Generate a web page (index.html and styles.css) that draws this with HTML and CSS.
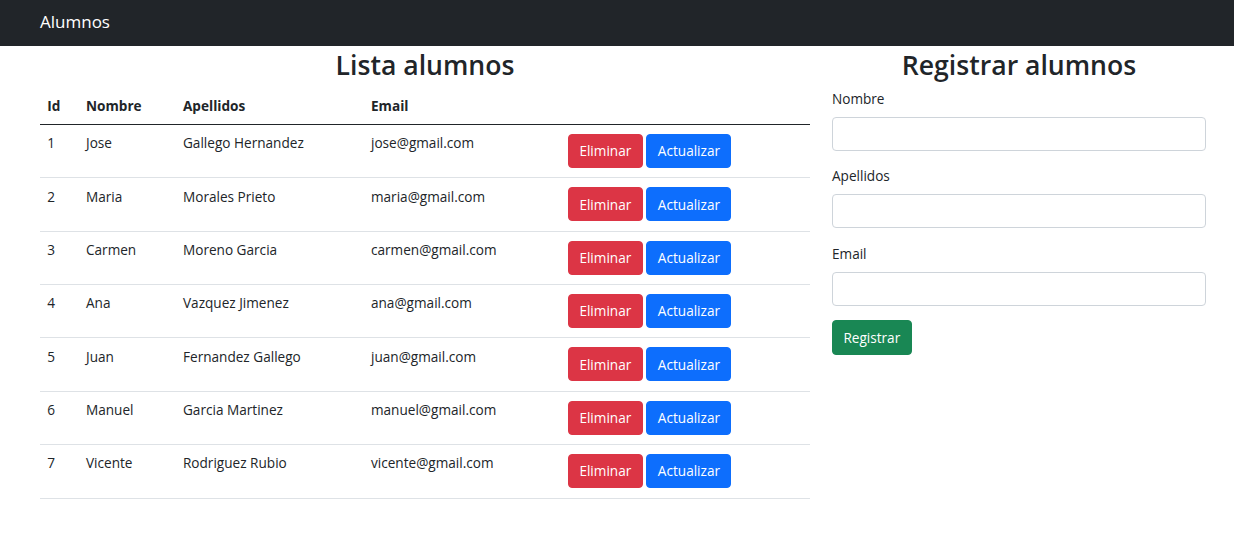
FILE: index.html
```html
<!DOCTYPE html>
<html lang="es">
<head>
<meta charset="utf-8">
<title>Alumnos</title>
<link rel="stylesheet" href="styles.css">
</head>
<body>
<nav class="navbar">
  <span class="brand">Alumnos</span>
</nav>
<main class="main">
  <section class="list">
    <h2 class="title">Lista alumnos</h2>
    <table class="table">
      <colgroup>
        <col class="c-id"><col class="c-nombre"><col class="c-apellidos"><col class="c-email"><col class="c-actions">
      </colgroup>
      <thead>
        <tr><th>Id</th><th>Nombre</th><th>Apellidos</th><th>Email</th><th></th></tr>
      </thead>
      <tbody>
        <tr><td>1</td><td>Jose</td><td>Gallego Hernandez</td><td>jose@gmail.com</td><td><div class="actions"><button class="btn btn-danger">Eliminar</button><button class="btn btn-primary">Actualizar</button></div></td></tr>
        <tr><td>2</td><td>Maria</td><td>Morales Prieto</td><td>maria@gmail.com</td><td><div class="actions"><button class="btn btn-danger">Eliminar</button><button class="btn btn-primary">Actualizar</button></div></td></tr>
        <tr><td>3</td><td>Carmen</td><td>Moreno Garcia</td><td>carmen@gmail.com</td><td><div class="actions"><button class="btn btn-danger">Eliminar</button><button class="btn btn-primary">Actualizar</button></div></td></tr>
        <tr><td>4</td><td>Ana</td><td>Vazquez Jimenez</td><td>ana@gmail.com</td><td><div class="actions"><button class="btn btn-danger">Eliminar</button><button class="btn btn-primary">Actualizar</button></div></td></tr>
        <tr><td>5</td><td>Juan</td><td>Fernandez Gallego</td><td>juan@gmail.com</td><td><div class="actions"><button class="btn btn-danger">Eliminar</button><button class="btn btn-primary">Actualizar</button></div></td></tr>
        <tr><td>6</td><td>Manuel</td><td>Garcia Martinez</td><td>manuel@gmail.com</td><td><div class="actions"><button class="btn btn-danger">Eliminar</button><button class="btn btn-primary">Actualizar</button></div></td></tr>
        <tr><td>7</td><td>Vicente</td><td>Rodriguez Rubio</td><td>vicente@gmail.com</td><td><div class="actions"><button class="btn btn-danger">Eliminar</button><button class="btn btn-primary">Actualizar</button></div></td></tr>
      </tbody>
    </table>
  </section>
  <section class="register">
    <h2 class="title">Registrar alumnos</h2>
    <form class="form">
      <div class="field">
        <label class="label" for="nombre">Nombre</label>
        <input class="input" id="nombre" type="text">
      </div>
      <div class="field">
        <label class="label" for="apellidos">Apellidos</label>
        <input class="input" id="apellidos" type="text">
      </div>
      <div class="field">
        <label class="label" for="email">Email</label>
        <input class="input" id="email" type="email">
      </div>
      <button class="btn btn-success" type="button">Registrar</button>
    </form>
  </section>
</main>
</body>
</html>
```

FILE: styles.css
```css
* { box-sizing: border-box; }

body {
  margin: 0;
  font-family: "Open Sans", "Noto Sans", "Liberation Sans", sans-serif;
  font-size: 13.6px;
  line-height: 21.6px;
  color: #212529;
  background: #fff;
}

.navbar {
  background: #212529;
  height: 46px;
  padding: 7.5px 40px 0;
}

.brand {
  color: #fff;
  font-size: 17px;
  line-height: 27px;
}

.main {
  display: flex;
  gap: 22px;
  padding: 2px 28px 0 40px;
}

.list { flex: 0 0 770px; }
.register { flex: 1 1 auto; min-width: 0; }

.title {
  margin: 0 0 5.4px;
  font-size: 26.6px;
  font-weight: 600;
  line-height: 34.56px;
  text-align: center;
}

.table {
  width: 100%;
  border-collapse: collapse;
  table-layout: fixed;
}

.c-id { width: 38.8px; }
.c-nombre { width: 97px; }
.c-apellidos { width: 188px; }
.c-email { width: 197px; }
.c-actions { width: 249.2px; }

.table th,
.table td {
  padding: 7.2px;
  text-align: left;
  vertical-align: top;
  border-bottom: 1px solid #dee2e6;
  white-space: nowrap;
}

.table thead th {
  font-weight: 700;
  border-bottom: 1px solid #212529;
}

.actions {
  display: flex;
  gap: 3.8px;
  padding: 1.8px 0 2.23px;
}

.btn {
  font-family: inherit;
  font-size: 13.6px;
  line-height: 21.6px;
  height: 34px;
  padding: 5.2px 10.4px;
  border: 1px solid transparent;
  border-radius: 4px;
  color: #fff;
  cursor: pointer;
}

.btn-danger { background: #dc3545; border-color: #dc3545; }
.btn-primary { background: #0d6efd; border-color: #0d6efd; }
.btn-success { background: #198754; border-color: #198754; height: 34.4px; }

.field { margin-bottom: 14.7px; }

.label {
  display: block;
  margin-bottom: 7.2px;
}

.input {
  display: block;
  width: 100%;
  height: 34px;
  border: 1px solid #ced4da;
  border-radius: 4px;
  background: #fff;
  font: inherit;
  padding: 5px 11px;
}
```
